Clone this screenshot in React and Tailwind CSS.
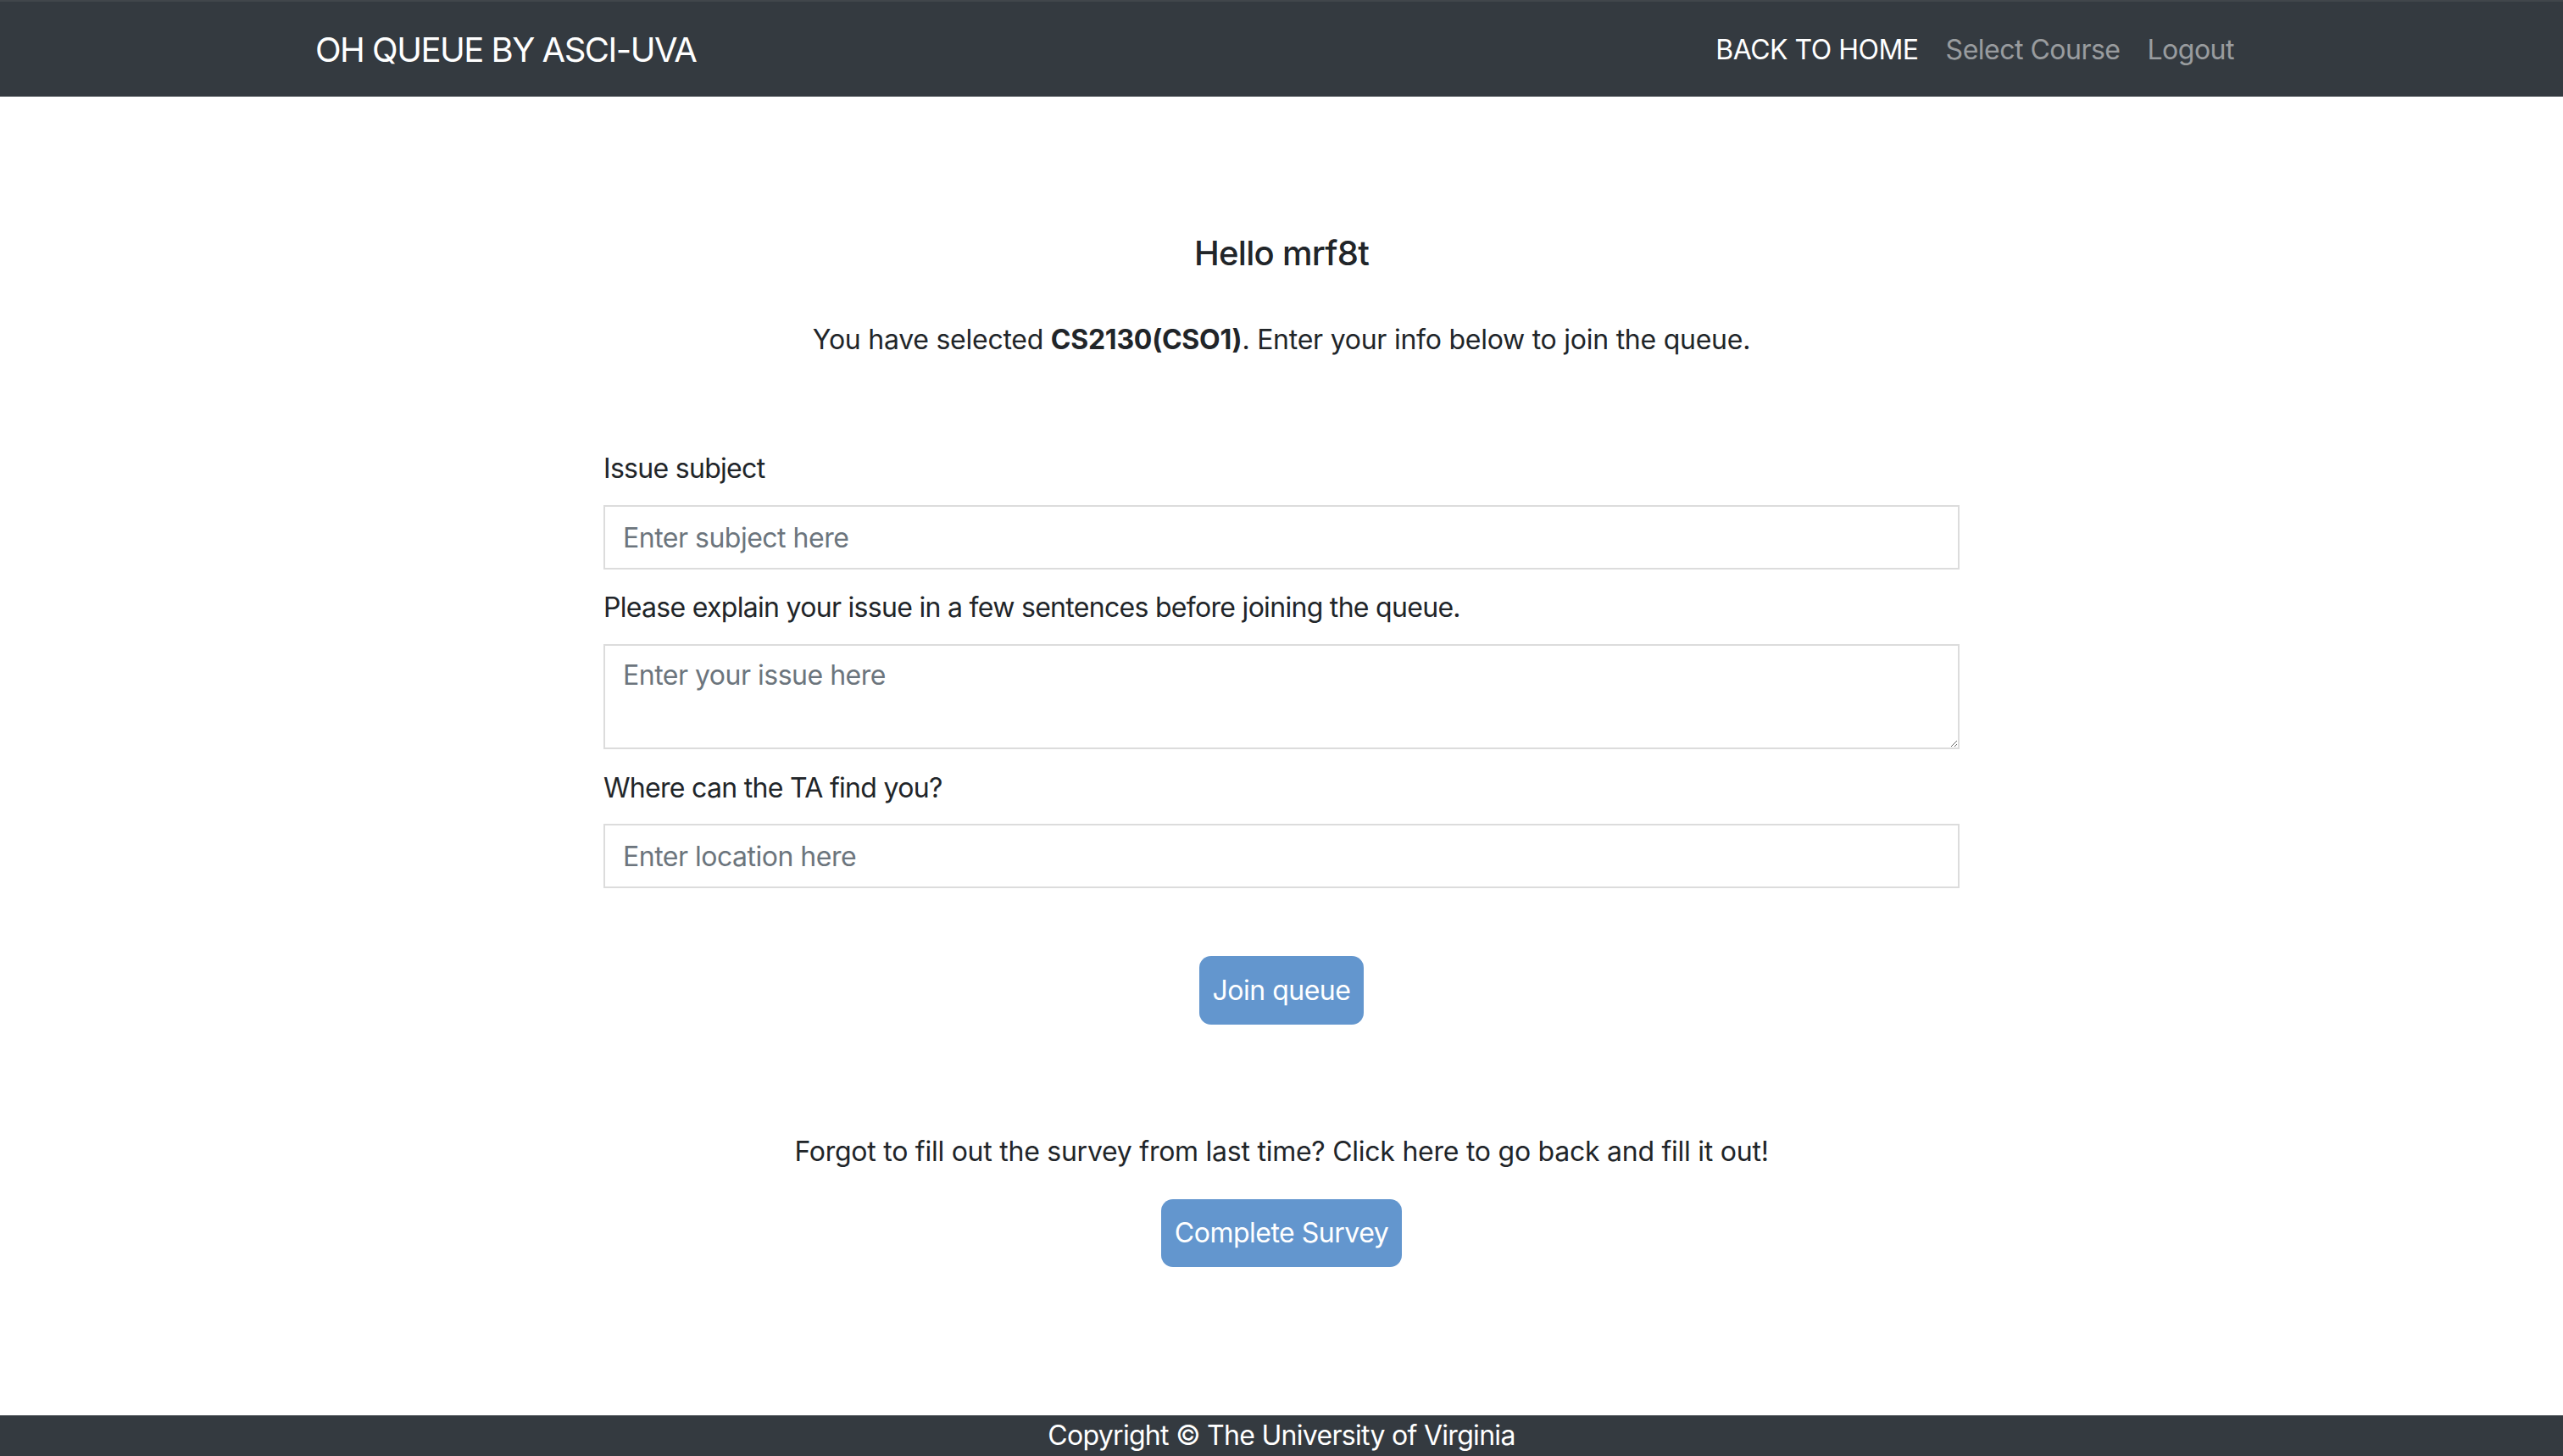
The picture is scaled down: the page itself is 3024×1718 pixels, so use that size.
import React from "react";

export default function App() {
  const font = { fontFamily: "Inter, 'Noto Sans', sans-serif" };
  return (
    <div className="min-h-screen flex flex-col bg-white text-[#212529]" style={font}>
      <nav className="h-[114px] bg-[#343a40] border-t-2 border-[#41464b] flex items-center pt-[2px]">
        <div className="w-[2280px] mx-auto flex items-center justify-between">
          <span className="text-[40px] leading-[60px] text-white tracking-[-1.5px]">OH QUEUE BY ASCI-UVA</span>
          <div className="flex items-center text-[32px] leading-[48px] tracking-[-0.5px]">
            <a className="px-4 text-white">BACK TO HOME</a>
            <a className="px-4 text-white/50">Select Course</a>
            <a className="pl-4 pr-4 text-white/50">Logout</a>
          </div>
        </div>
      </nav>

      <main className="flex-1 flex flex-col items-center">
        <h5 className="mt-[161px] text-[40px] leading-[48px] font-medium tracking-[-0.7px]">Hello mrf8t</h5>
        <p className="mt-[54px] text-[32px] leading-[48px] tracking-[-0.25px]">
          You have selected <b className="font-bold">CS2130(CSO1)</b>. Enter your info below to join the queue.
        </p>

        <form className="w-[1600px] mt-[104px] flex flex-col text-[32px] tracking-[-0.7px]">
          <label className="leading-[48px] mb-[19px]">Issue subject</label>
          <input
            className="h-[76px] border-2 border-[#dcdcdc] px-[21px] text-[32px] tracking-[-0.5px] placeholder:text-[#6c757d] outline-none"
            placeholder="Enter subject here"
          />
          <label className="leading-[48px] mt-[21px] mb-[19px]">
            Please explain your issue in a few sentences before joining the queue.
          </label>
          <textarea
            className="h-[124px] border-2 border-[#dcdcdc] px-[21px] py-[11px] text-[32px] leading-[48px] tracking-[-0.5px] placeholder:text-[#6c757d] outline-none"
            placeholder="Enter your issue here"
          />
          <label className="leading-[48px] mt-[22px] mb-[18px]">Where can the TA find you?</label>
          <input
            className="h-[76px] border-2 border-[#dcdcdc] px-[21px] text-[32px] tracking-[-0.5px] placeholder:text-[#6c757d] outline-none"
            placeholder="Enter location here"
          />
          <div className="flex justify-center mt-[80px]">
            <button type="button" className="h-[81px] px-[16px] rounded-[14px] bg-[#6396ce] text-white text-[32px] leading-[48px] tracking-[-0.5px]">
              Join queue
            </button>
          </div>
        </form>

        <p className="mt-[126px] text-[32px] leading-[48px] tracking-[-0.25px]">
          Forgot to fill out the survey from last time? Click here to go back and fill it out!
        </p>
        <button type="button" className="mt-[32px] h-[80px] px-[16px] rounded-[14px] bg-[#6396ce] text-white text-[32px] leading-[48px] tracking-[-0.5px]">
          Complete Survey
        </button>
      </main>

      <footer className="h-[48px] bg-[#343a40] text-white text-center text-[32px] leading-[48px] tracking-[-0.7px]">
        Copyright © The University of Virginia
      </footer>
    </div>
  );
}
